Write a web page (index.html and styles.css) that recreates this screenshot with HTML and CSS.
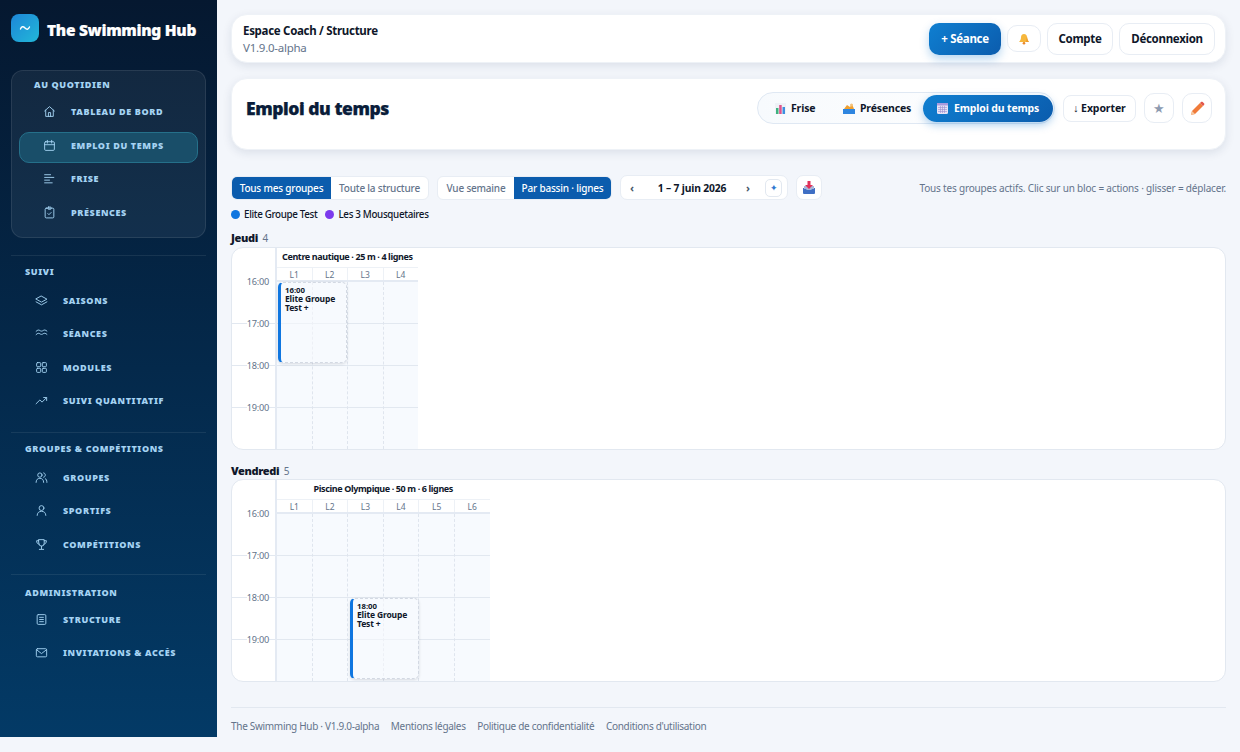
FILE: index.html
```html
<!DOCTYPE html>
<html lang="fr">

<head>
	<meta charset="utf-8">
	<title>The Swimming Hub - Emploi du temps</title>
	<link rel="stylesheet" href="styles.css">
</head>

<body>
	<div class="shell">
		<aside class="sidebar">
			<div class="brand">
				<span class="brand-logo"><svg width="14" height="14" viewBox="0 0 14 14" fill="none" stroke="#fff" stroke-width="1.4" stroke-linecap="round"><path d="M2.500 8c1-2.800 2.800-2.800 4.500-1s3.200 1.800 4.500-1"/></svg></span>
				<span class="brand-name">The Swimming Hub</span>
			</div>

			<div class="nav-box">
				<div class="nav-label">Au quotidien</div>
				<a class="nav-item"><svg class="nav-icon" viewBox="0 0 24 24"><path d="M3 11l9-8 9 8"/><path d="M5 9.500V21h14V9.500"/><path d="M10 21v-7h4v7"/></svg>Tableau de bord</a>
				<a class="nav-item active"><svg class="nav-icon" viewBox="0 0 24 24"><rect x="3" y="5" width="18" height="16" rx="2"/><path d="M8 2.500v5M16 2.500v5M3 10.500h18"/></svg>Emploi du temps</a>
				<a class="nav-item"><svg class="nav-icon" viewBox="0 0 24 24"><path d="M3 5h11M3 10h17M3 15h9M3 20h14"/></svg>Frise</a>
				<a class="nav-item"><svg class="nav-icon" viewBox="0 0 24 24"><rect x="4" y="4" width="16" height="18" rx="2"/><rect x="9" y="2" width="6" height="4" rx="1"/><path d="M9 14l2 2 4-4"/></svg>Présences</a>
			</div>

			<div class="nav-section first">
				<div class="nav-label">Suivi</div>
				<a class="nav-item"><svg class="nav-icon" viewBox="0 0 24 24"><path d="M12 4l10 5.500-10 5.500L2 9.500z"/><path d="M2 14.500L12 20l10-5.500"/></svg>Saisons</a>
				<a class="nav-item"><svg class="nav-icon" viewBox="0 0 24 24"><path d="M2 8c3-3 5-3 7-1.500s4 1.500 6 0 4-1.500 7 1"/><path d="M2 14c3-3 5-3 7-1.500s4 1.500 6 0 4-1.500 7 1"/></svg>Séances</a>
				<a class="nav-item"><svg class="nav-icon" viewBox="0 0 24 24"><rect x="3" y="3" width="7.500" height="7.500" rx="1.500"/><rect x="13.500" y="3" width="7.500" height="7.500" rx="1.500"/><rect x="3" y="13.500" width="7.500" height="7.500" rx="1.500"/><rect x="13.500" y="13.500" width="7.500" height="7.500" rx="1.500"/></svg>Modules</a>
				<a class="nav-item"><svg class="nav-icon" viewBox="0 0 24 24"><path d="M2 18l7-7 4 4 8-8"/><path d="M16 6.500h5.500V12"/></svg>Suivi quantitatif</a>
			</div>

			<div class="nav-section">
				<div class="nav-label">Groupes &amp; compétitions</div>
				<a class="nav-item"><svg class="nav-icon" viewBox="0 0 24 24"><circle cx="9" cy="7.500" r="4"/><path d="M2 21c0-5 3-7.500 7-7.500s7 2.500 7 7.500"/><path d="M16 3.500c2 .5 3 2 3 4s-1 3.500-3 4M19 14c2 1 3 3.500 3 7"/></svg>Groupes</a>
				<a class="nav-item"><svg class="nav-icon" viewBox="0 0 24 24"><circle cx="12" cy="7.500" r="4.500"/><path d="M4 21c0-5 3.500-7.500 8-7.500s8 2.500 8 7.500"/></svg>Sportifs</a>
				<a class="nav-item"><svg class="nav-icon" viewBox="0 0 24 24"><path d="M7 3h10v7a5 5 0 0 1-10 0z"/><path d="M7 5H3c0 4 1.500 6 4.500 6.500M17 5h4c0 4-1.500 6-4.500 6.500"/><path d="M12 15v5M8 21h8"/></svg>Compétitions</a>
			</div>

			<div class="nav-section">
				<div class="nav-label">Administration</div>
				<a class="nav-item"><svg class="nav-icon" viewBox="0 0 24 24"><rect x="4" y="3" width="16" height="18" rx="2"/><path d="M8.500 8h7M8.500 12h7M8.500 16h7"/></svg>Structure</a>
				<a class="nav-item"><svg class="nav-icon" viewBox="0 0 24 24"><rect x="2.500" y="5" width="19" height="15" rx="2"/><path d="M3 7l9 7 9-7"/></svg>Invitations &amp; accès</a>
			</div>
		</aside>

		<main class="main">
			<header class="topbar">
				<div>
					<div class="topbar-title">Espace Coach / Structure</div>
					<div class="topbar-version">V1.9.0-alpha</div>
				</div>
				<div class="topbar-actions">
					<button class="btn btn-primary">+ Séance</button>
					<button class="btn btn-bell">
						<svg width="12" height="12" viewBox="0 0 12 12"><path d="M6 1c-2 0-3 1.500-3 3.500 0 2.500-1.200 3.500-2 4.500h10c-.8-1-2-2-2-4.500C9 2.500 8 1 6 1z" fill="#f6b73c"/><path d="M9 3.500C9.500 6 10 8 11 9H8C8.500 7 8.500 5 9 3.500z" fill="#ee9a2d"/><circle cx="6" cy="10.300" r="1.300" fill="#e8862a"/></svg>
					</button>
					<button class="btn btn-account">Compte</button>
					<button class="btn btn-logout">Déconnexion</button>
				</div>
			</header>

			<section class="page-head">
				<h1>Emploi du temps</h1>
				<div class="page-tools">
					<nav class="tabs">
						<a class="tab">
							<svg width="11" height="11" viewBox="0 0 11 11"><rect width="11" height="11" fill="#eef2f7"/><rect x="1" y="5" width="2.500" height="6" fill="#3fb27f"/><rect x="4.200" y="2" width="2.500" height="9" fill="#e0528a"/><rect x="7.500" y="4" width="2.500" height="7" fill="#3d8fe0"/></svg>
							Frise
						</a>
						<a class="tab">
							<svg width="12" height="11" viewBox="0 0 12 11"><rect y="6" width="12" height="5" fill="#2f86e0"/><path d="M1 6l3-4 3 2 2-3 2 5z" fill="#f0a030"/><circle cx="8.500" cy="2" r="1.500" fill="#f4c27a"/></svg>
							Présences
						</a>
						<a class="tab active">
							<svg width="11" height="11" viewBox="0 0 11 11"><rect width="11" height="11" rx="1.500" fill="#e6e2f4"/><rect width="11" height="2.500" fill="#a99ade"/><path d="M1 4.500h9M1 6.500h9M1 8.500h9M3.500 3v7M5.500 3v7M7.500 3v7" stroke="#9a8fd0" stroke-width=".6"/></svg>
							Emploi du temps
						</a>
					</nav>
					<button class="btn btn-small">↓ Exporter</button>
					<button class="btn btn-square star">★</button>
					<button class="btn btn-square">
						<svg width="15" height="15" viewBox="0 0 15 15"><path d="M1 14l1-4 8-8 3 3-8 8z" fill="#f07b3a"/><path d="M10 2l1-1c.5-.5 1.200-.5 1.700 0l1.300 1.300c.5.500.5 1.200 0 1.700l-1 1z" fill="#e2574c"/><path d="M1 14l1-4 3 3z" fill="#f6c9a0"/></svg>
					</button>
				</div>
			</section>

			<div class="controls">
				<div class="segment">
					<a class="segment-item on">Tous mes groupes</a>
					<a class="segment-item">Toute la structure</a>
				</div>
				<div class="segment">
					<a class="segment-item">Vue semaine</a>
					<a class="segment-item on">Par bassin · lignes</a>
				</div>
				<div class="date-nav">
					<span class="date-arrow">‹</span>
					<span class="date-range">1 – 7 juin 2026</span>
					<span class="date-arrow">›</span>
					<span class="date-today">✦</span>
				</div>
				<button class="download">
					<svg width="12" height="13" viewBox="0 0 12 13"><path d="M0 7h3l1 2h4l1-2h3v5a1 1 0 0 1-1 1H1a1 1 0 0 1-1-1z" fill="#3f6fc4"/><path d="M1 5h10v3H8.500L8 9H4l-.5-1H1z" fill="#a9b7d8"/><path d="M4.500 0h3v4H10L6 8 2 4h2.500z" fill="#e0315a"/></svg>
				</button>
				<span class="hint">Tous tes groupes actifs. Clic sur un bloc = actions · glisser = déplacer.</span>
			</div>

			<div class="legend">
				<span class="legend-item"><i class="dot blue"></i>Elite Groupe Test</span>
				<span class="legend-item"><i class="dot violet"></i>Les 3 Mousquetaires</span>
			</div>

			<div class="day-title">Jeudi <span>4</span></div>
			<div class="day-card">
				<div class="times">
					<div class="time first"><span>16:00</span></div>
					<div class="time"><span>17:00</span></div>
					<div class="time"><span>18:00</span></div>
					<div class="time"><span>19:00</span></div>
				</div>
				<div class="pool lanes-4">
					<div class="pool-name left">Centre nautique · 25 m · 4 lignes</div>
					<div class="lane-heads"><span>L1</span><span>L2</span><span>L3</span><span>L4</span></div>
					<div class="lanes">
						<i></i><i></i><i></i><i></i>
						<div class="event at-1">
							<b class="event-time">16:00</b>
							<b class="event-name">Elite Groupe Test +</b>
						</div>
					</div>
				</div>
			</div>

			<div class="day-title second">Vendredi <span>5</span></div>
			<div class="day-card">
				<div class="times">
					<div class="time first"><span>16:00</span></div>
					<div class="time"><span>17:00</span></div>
					<div class="time"><span>18:00</span></div>
					<div class="time"><span>19:00</span></div>
				</div>
				<div class="pool lanes-6">
					<div class="pool-name">Piscine Olympique · 50 m · 6 lignes</div>
					<div class="lane-heads"><span>L1</span><span>L2</span><span>L3</span><span>L4</span><span>L5</span><span>L6</span></div>
					<div class="lanes">
						<i></i><i></i><i></i><i></i><i></i><i></i>
						<div class="event at-2">
							<b class="event-time">18:00</b>
							<b class="event-name">Elite Groupe Test +</b>
						</div>
					</div>
				</div>
			</div>

			<footer class="footer">
				<span>The Swimming Hub · V1.9.0-alpha</span>
				<a>Mentions légales</a>
				<a>Politique de confidentialité</a>
				<a>Conditions d'utilisation</a>
			</footer>
		</main>
	</div>
</body>
</html>
```

FILE: styles.css
```css
:root {
	--blue: #0b5cad;
	--ink: #0f172a;
	--navy: #0a1d3a;
	--muted: #64748b;
	--line: #e2e8f0;
	--nav-text: #a5d3f3;
}

* {
	box-sizing: border-box;
}

html,
body {
	margin: 0;
	height: 752px;
	overflow: hidden;
}

body {
	font-family: 'Noto Sans', 'Open Sans', sans-serif;
	font-size: 11px;
	color: var(--ink);
	background-color: #f3f6fb;
}

button {
	font-family: inherit;
}

.shell {
	display: flex;
	height: 737px;
}

/* sidebar */
.sidebar {
	flex: 0 0 217px;
	width: 217px;
	min-width: 0;
	padding: 14px 11px 0;
	background: linear-gradient(to bottom, #051830, #033a66);
}

.brand {
	display: flex;
	align-items: center;
	gap: 8px;
	height: 28px;
	margin-bottom: 28px;
}

.brand-logo {
	display: flex;
	align-items: center;
	justify-content: center;
	width: 28px;
	height: 28px;
	border-radius: 8px;
	background: linear-gradient(135deg, #1d86d8, #22b8d8);
}

.brand-name {
	padding-top: 3px;
	color: #fff;
	font-size: 15.500px;
	font-weight: 900;
	letter-spacing: -0.300px;
	white-space: nowrap;
	-webkit-text-stroke: 0.200px #fff;
}

.nav-box {
	height: 168px;
	padding: 7px 7px 0;
	background-color: rgba(255, 255, 255, 0.06);
	border: 1px solid rgba(255, 255, 255, 0.09);
	border-radius: 12px;
}

.nav-box .nav-label {
	padding-left: 15px;
	margin-bottom: 6.500px;
}

.nav-box .nav-item {
	padding-bottom: 5px;
}

.nav-section {
	padding-top: 9px;
	border-top: 1px solid rgba(255, 255, 255, 0.08);
	height: 142px;
}

.nav-section.first {
	margin-top: 17px;
	height: 177px;
}

.nav-section:last-child {
	height: auto;
	padding-top: 11px;
}

.nav-section:last-child .nav-label {
	margin-bottom: 5px;
}

.nav-label {
	height: 14px;
	line-height: 14px;
	color: var(--nav-text);
	font-size: 9px;
	font-weight: 900;
	letter-spacing: 0.620px;
	text-transform: uppercase;
	white-space: nowrap;
	padding-left: 14px;
	margin-bottom: 7px;
}

.nav-item {
	display: flex;
	align-items: center;
	height: 31px;
	margin-bottom: 2.600px;
	padding: 0 0 3px 23px;
	gap: 15px;
	color: var(--nav-text);
	font-size: 9px;
	font-weight: 900;
	letter-spacing: 0.620px;
	text-transform: uppercase;
	white-space: nowrap;
	border: 1px solid transparent;
	border-radius: 10px;
}

.nav-item.active {
	background-color: #194e69;
	border-color: #25708a;
}

.nav-icon {
	flex: 0 0 13px;
	width: 13px;
	height: 13px;
	fill: none;
	stroke: var(--nav-text);
	stroke-width: 1.700;
	stroke-linecap: round;
	stroke-linejoin: round;
}

/* main */
.main {
	flex: 1;
	padding: 14px 14px 0;
	min-width: 0;
}

.topbar {
	display: flex;
	align-items: center;
	justify-content: space-between;
	height: 49px;
	padding: 0 10px 0 11px;
	background-color: #fff;
	border: 1px solid #eef2f7;
	border-radius: 16px;
	box-shadow: 0 3px 10px rgba(15, 40, 80, 0.1);
}

.topbar-title {
	font-size: 11.500px;
	font-weight: 700;
	letter-spacing: -0.300px;
	line-height: 16px;
	padding-top: 1px;
}

.topbar-version {
	font-size: 11.500px;
	letter-spacing: -0.250px;
	line-height: 17px;
	color: var(--muted);
}

.topbar-actions,
.page-tools {
	display: flex;
	align-items: center;
	gap: 6px;
}

.btn {
	height: 32px;
	padding: 0;
	font-size: 11.500px;
	font-weight: 700;
	letter-spacing: -0.300px;
	color: var(--ink);
	background-color: #fff;
	border: 1px solid #e8edf4;
	border-radius: 10px;
}

.btn-account {
	width: 66px;
}

.btn-logout {
	width: 96px;
}

.btn-primary {
	width: 72px;
	color: #fff;
	border: 0;
	background: linear-gradient(135deg, #0f7fd1, #0b5cad);
	box-shadow: 0 4px 10px rgba(14, 116, 204, 0.3);
}

.btn-bell {
	display: flex;
	align-items: center;
	justify-content: center;
	width: 34px;
	height: 27px;
}

.page-head {
	display: flex;
	justify-content: space-between;
	align-items: flex-start;
	height: 72px;
	margin-top: 15px;
	padding: 13px 13px 0 14px;
	background-color: #fff;
	border: 1px solid #eef2f7;
	border-radius: 16px;
	box-shadow: 0 3px 10px rgba(15, 40, 80, 0.1);
}

h1 {
	margin: 0;
	font-size: 17.500px;
	font-weight: 900;
	letter-spacing: -0.450px;
	line-height: 33px;
	color: var(--navy);
	-webkit-text-stroke: 0.250px var(--navy);
}

.page-tools {
	gap: 8px;
	height: 32px;
}

.tabs {
	display: flex;
	align-items: center;
	height: 32px;
	width: 298px;
	padding: 0 0 0 1px;
	border: 1px solid #dfe8f3;
	border-radius: 16px;
	background: linear-gradient(to right, #f7fafd, #fff);
}

.tab {
	display: flex;
	align-items: center;
	gap: 5px;
	height: 27px;
	font-size: 10.500px;
	font-weight: 700;
	letter-spacing: -0.150px;
	border-radius: 14px;
	white-space: nowrap;
}

.tab:nth-child(1) {
	padding-left: 16px;
	width: 69px;
}

.tab:nth-child(2) {
	padding-left: 15px;
	width: 95px;
}

.tab.active {
	width: 130px;
	padding-left: 14px;
	gap: 6px;
	color: #fff;
	background: linear-gradient(135deg, #0f7fd1, #0b5cad);
	box-shadow: 0 3px 8px rgba(14, 116, 204, 0.35);
}

.btn-small {
	width: 73px;
	height: 27px;
	font-size: 10.500px;
	letter-spacing: -0.100px;
	border-radius: 8px;
}

.btn-square {
	display: flex;
	align-items: center;
	justify-content: center;
	width: 30px;
	height: 30px;
}

.star {
	color: #8d9ab0;
	font-size: 13px;
	font-weight: 400;
}

/* controls */
.controls {
	display: flex;
	align-items: center;
	gap: 8px;
	height: 25px;
	margin-top: 25px;
}

.segment {
	display: flex;
	height: 24px;
	overflow: hidden;
	background-color: #fff;
	border: 1px solid #e8edf4;
	border-radius: 6px;
}

.segment-item {
	display: flex;
	align-items: center;
	justify-content: center;
	width: 97px;
	font-size: 10px;
	font-weight: 500;
	letter-spacing: -0.200px;
	color: var(--muted);
	white-space: nowrap;
}

.segment:first-child .segment-item.on {
	width: 99px;
}

.segment:nth-child(2) .segment-item:first-child {
	width: 76px;
}

.segment-item.on {
	color: #fff;
	background-color: var(--blue);
}

.date-nav {
	display: flex;
	align-items: center;
	width: 168px;
	height: 25px;
	padding: 0 5px 0 9px;
	background-color: #fff;
	border: 1px solid #e8edf4;
	border-radius: 7px;
}

.date-arrow {
	width: 8px;
	font-size: 11px;
	font-weight: 700;
	color: #475569;
}

.date-range {
	flex: 1;
	text-align: center;
	font-size: 10.300px;
	font-weight: 700;
	letter-spacing: -0.150px;
}

.date-today {
	display: flex;
	align-items: center;
	justify-content: center;
	width: 17px;
	height: 18px;
	margin-left: 11px;
	font-size: 9px;
	color: #2f78d0;
	border: 1px solid #e2e8f0;
	border-radius: 5px;
}

.download {
	display: flex;
	align-items: center;
	justify-content: center;
	width: 26px;
	height: 25px;
	padding: 0;
	background-color: #fff;
	border: 1px solid #e8edf4;
	border-radius: 7px;
}

.hint {
	margin-left: auto;
	font-size: 10px;
	letter-spacing: -0.180px;
	color: var(--muted);
	white-space: nowrap;
}

.legend {
	display: flex;
	gap: 8px;
	height: 16px;
	margin-top: 6px;
}

.legend-item {
	display: flex;
	align-items: center;
	gap: 4px;
	font-size: 9.800px;
	font-weight: 500;
	letter-spacing: -0.330px;
}

.dot {
	width: 9px;
	height: 9px;
	border-radius: 50%;
}

.dot.blue {
	background-color: #0f76e0;
}

.dot.violet {
	background-color: #7c3aed;
}

.day-title {
	height: 17px;
	margin-top: 8px;
	line-height: 15px;
	font-size: 11px;
	font-weight: 900;
	letter-spacing: -0.350px;
	color: var(--ink);
}

.day-title span {
	margin-left: 2px;
	font-size: 10px;
	font-weight: 400;
	color: var(--muted);
}

.day-title.second {
	margin-top: 13px;
	height: 16px;
}

.day-card {
	display: flex;
	height: 203px;
	overflow: hidden;
	background-color: #fff;
	border: 1px solid var(--line);
	border-radius: 12px;
}

.times {
	flex: 0 0 45px;
	padding-top: 33px;
	border-right: 2px solid #e4eaf3;
}

.time {
	height: 42px;
	padding-right: 6px;
	text-align: right;
	line-height: 0;
	font-size: 9.200px;
	letter-spacing: -0.250px;
	color: var(--muted);
	border-top: 1px solid var(--line);
}

.time span {
	background-color: #fff;
}

.time.first {
	border-top-color: transparent;
}

.pool {
	display: flex;
	flex-direction: column;
	flex: 0 0 auto;
}

.lanes-4 {
	width: 141px;
}

.lanes-6 {
	width: 212.500px;
}

.pool-name {
	height: 19px;
	line-height: 17px;
	text-align: center;
	font-size: 9px;
	font-weight: 700;
	letter-spacing: -0.380px;
	white-space: nowrap;
}

.pool-name.left {
	text-align: left;
	padding-left: 5px;
}

.lane-heads {
	display: flex;
	height: 15px;
	border-top: 1px solid #edf1f6;
	border-bottom: 2px solid #e4eaf3;
}

.lane-heads span {
	flex: 1;
	text-align: center;
	line-height: 13px;
	font-size: 8.500px;
	color: var(--muted);
	border-right: 1px solid #edf1f6;
}

.lane-heads span:last-child {
	border-right: 0;
}

.lanes {
	position: relative;
	display: flex;
	flex: 1;
	background-color: #f7fafe;
	background-image: linear-gradient(to bottom, var(--line) 1px, transparent 1px);
	background-size: 100% 42px;
	background-position: 0 41px;
}

.lanes i {
	flex: 1;
	border-right: 1px dashed #dfe5ee;
}

.lanes i:last-of-type {
	border-right: 0;
}

.event {
	position: absolute;
	display: flex;
	flex-direction: column;
	width: 69px;
	height: 81px;
	padding: 3px 3px 0 4px;
	background-color: rgba(247, 250, 254, 0.55);
	border: 1px dashed #d3d9e3;
	border-left: 3px solid #0f76e0;
	border-radius: 5px;
	box-shadow: 0 1px 3px rgba(15, 23, 42, 0.14);
}

.at-1 {
	top: 0;
	left: 1px;
}

.at-2 {
	top: 84px;
	left: 73px;
}

.event-time {
	font-size: 7.800px;
	line-height: 9px;
	font-weight: 700;
}

.event-name {
	margin-top: -1px;
	font-size: 8.500px;
	letter-spacing: -0.150px;
	line-height: 9px;
	font-weight: 700;
}

.footer {
	display: flex;
	gap: 11.500px;
	height: 38px;
	margin-top: 25px;
	padding-top: 11px;
	font-size: 10px;
	letter-spacing: -0.300px;
	color: var(--muted);
	border-top: 1px solid var(--line);
	white-space: nowrap;
}
```
